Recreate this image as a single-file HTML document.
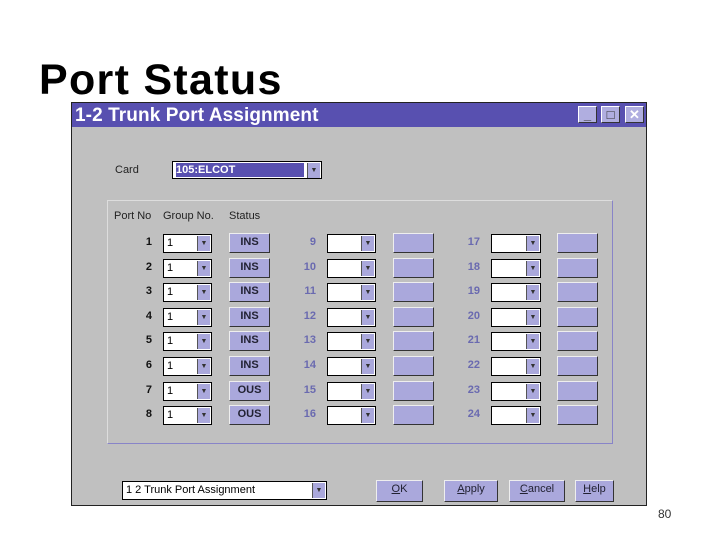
<!DOCTYPE html><html><head><style>
body{margin:0;width:720px;height:540px;background:#fff;position:relative;font-family:"Liberation Sans",sans-serif;overflow:hidden}
.a{position:absolute}
.win{left:71px;top:102px;width:576px;height:404px;background:#c0c0c0;border:1px solid #222;box-sizing:border-box}
.tb{left:0;top:0;width:574px;height:24px;background:#5850b0;color:#fff;font-weight:bold;font-size:19px;line-height:25px;padding-left:3px;box-sizing:border-box;letter-spacing:0.1px}
.wb{top:3px;width:19px;height:17px;background:#b0aee0;border:1px solid;border-color:#fff #333 #333 #fff;box-sizing:border-box;color:#333;font-size:13px;text-align:center;line-height:15px;font-weight:bold}
.dd{height:19px;background:#fff;border:1px solid #000;box-sizing:border-box;font-size:11px;line-height:17px;padding-left:3px;color:#000}
.dd i{position:absolute;right:1px;top:1px;width:12px;height:15px;background:#aaa8dc;border-left:1px solid #555;font-style:normal;font-size:7px;text-align:center;line-height:15px;color:#333}
.bt{height:20px;background:#aaa8dc;border:1px solid;border-color:#eee #333 #333 #eee;box-sizing:border-box;font-size:11px;font-weight:bold;text-align:center;line-height:17px;color:#223}
.n{font-size:11px;font-weight:bold;color:#6a6ab0;width:24px;text-align:right}
.p{font-size:11px;font-weight:bold;color:#111;width:24px;text-align:right}
.lb{font-size:11px;color:#222}
</style></head><body>
<div class="a" style="left:39px;top:56px;font-size:43px;font-weight:bold;color:#000;letter-spacing:1.3px">Port Status</div>
<div class="a" style="left:658px;top:507px;font-size:12px;color:#333">80</div>
<div class="a win">
<div class="a tb">1-2 Trunk Port Assignment</div>
<div class="a wb" style="left:506px">_</div>
<div class="a wb" style="left:529px">□</div>
<div class="a wb" style="left:553px;color:#fff">✕</div>
</div>
<div class="a lb" style="left:115px;top:164px">Card</div>
<div class="a dd" style="left:172px;top:161px;width:150px;height:18px"><span style="background:#5850b0;color:#fff;display:inline-block;width:128px;line-height:14px;font-weight:bold">105:ELCOT</span><i>▼</i></div>
<div class="a" style="left:107px;top:200px;width:506px;height:244px;border:1px solid #8884c8;border-top-color:#ddd;border-left-color:#ddd;box-sizing:border-box"></div>
<div class="a lb" style="left:114px;top:210px">Port No</div>
<div class="a lb" style="left:163px;top:210px">Group No.</div>
<div class="a lb" style="left:229px;top:210px">Status</div>
<div id="rows"></div>
<div class="a dd" style="left:122px;top:481px;width:205px"><span>1 2 Trunk Port Assignment</span><i>▼</i></div>
<div class="a bt" style="left:376px;top:480px;width:47px;height:22px;font-weight:normal"><u>O</u>K</div>
<div class="a bt" style="left:444px;top:480px;width:54px;height:22px;font-weight:normal"><u>A</u>pply</div>
<div class="a bt" style="left:509px;top:480px;width:56px;height:22px;font-weight:normal"><u>C</u>ancel</div>
<div class="a bt" style="left:575px;top:480px;width:39px;height:22px;font-weight:normal"><u>H</u>elp</div>
<script>
var st=["INS","INS","INS","INS","INS","INS","OUS","OUS"],h="";
for(var r=0;r<8;r++){var y=234+r*24.6;
h+='<div class="a p" style="left:128px;top:'+(y+2)+'px">'+(r+1)+'</div>';
h+='<div class="a dd" style="left:163px;top:'+y+'px;width:49px">1<i>▼</i></div>';
h+='<div class="a bt" style="left:229px;top:'+(y-1)+'px;width:41px">'+st[r]+'</div>';
h+='<div class="a n" style="left:292px;top:'+(y+2)+'px">'+(r+9)+'</div>';
h+='<div class="a dd" style="left:327px;top:'+y+'px;width:49px"><i>▼</i></div>';
h+='<div class="a bt" style="left:393px;top:'+(y-1)+'px;width:41px"></div>';
h+='<div class="a n" style="left:456px;top:'+(y+2)+'px">'+(r+17)+'</div>';
h+='<div class="a dd" style="left:491px;top:'+y+'px;width:50px"><i>▼</i></div>';
h+='<div class="a bt" style="left:557px;top:'+(y-1)+'px;width:41px"></div>';}
document.getElementById('rows').innerHTML=h;
</script>
</body></html>
